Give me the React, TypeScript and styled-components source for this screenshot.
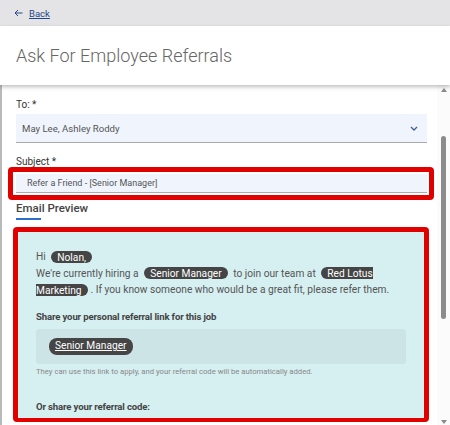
import React from "react";
import styled, { createGlobalStyle } from "styled-components";

const GlobalStyle = createGlobalStyle`
  html, body {
    margin: 0;
    padding: 0;
    height: 100%;
    overflow: hidden;
    background: #fff;
    font-family: Roboto, "Liberation Sans", Arial, sans-serif;
  }
`;

const Page = styled.div`
  display: flex;
  flex-direction: column;
  width: 450px;
  height: 425px;
`;

const TopBar = styled.div`
  height: 26px;
  background: #e4e4e6;
  display: flex;
  align-items: center;
  padding-left: 14px;
  gap: 6px;
  font-size: 9.5px;
`;

const BackLink = styled.a`
  color: #23468a;
  text-decoration: underline;
`;

const Header = styled.div`
  height: 59px;
  background: #fff;
  display: flex;
  align-items: center;
  padding-left: 16px;
  font-size: 18px;
  font-weight: 300;
  color: #666;
  box-shadow: 0 2px 4px rgba(0, 0, 0, 0.25);
  position: relative;
  z-index: 1;
`;

const Body = styled.div`
  flex: 1;
  display: flex;
  border-left: 2px solid #b9b9b9;
  min-height: 0;
`;

const Main = styled.div`
  flex: 1;
  padding: 13px 10px 0 14px;
  display: flex;
  flex-direction: column;
`;

const Label = styled.div<{ $gap: number; $top?: number }>`
  font-size: 10px;
  line-height: 14px;
  color: #333;
  margin-top: ${(p) => p.$top ?? 0}px;
  margin-bottom: ${(p) => p.$gap}px;
`;

const Field = styled.div<{ $h: number; $indent: number; $size: number }>`
  height: ${(p) => p.$h}px;
  background: #eff4fd;
  border-bottom: 1px solid #a9abb0;
  box-sizing: border-box;
  display: flex;
  align-items: center;
  justify-content: space-between;
  padding: 0 9px 0 ${(p) => p.$indent}px;
  font-size: ${(p) => p.$size}px;
  color: #555;
`;

const Highlighted = styled.div`
  position: relative;
`;

const RedMark = styled.div`
  position: absolute;
  top: -7px;
  bottom: -7px;
  left: -8px;
  right: -7px;
  border: 5px solid #e10000;
  border-radius: 4px;
  pointer-events: none;
`;

const SectionTitle = styled.div`
  font-size: 11.5px;
  font-weight: 500;
  color: #444;
  margin-top: 8px;
  padding-bottom: 3px;
  &::after {
    content: "";
    display: block;
    width: 25px;
    height: 2px;
    background: #2b6fc9;
    margin-top: 3px;
  }
`;

const PreviewFrame = styled.div`
  margin: 4px -2px 3px -3px;
  border: 5px solid #e10000;
  border-bottom-width: 4px;
  border-radius: 4px;
  flex: 1;
  min-height: 0;
  overflow: hidden;
`;

const Preview = styled.div`
  background: #d6eff1;
  height: 100%;
  padding: 17px 18px 0 18px;
  box-sizing: border-box;
  font-size: 10.2px;
  line-height: 16.5px;
  color: #555;
`;

const Pill = styled.span<{ $link?: boolean }>`
  background: #454545;
  color: #fff;
  border-radius: 8px;
  padding: 0.5px 6px;
  margin: 0 3px;
  text-decoration: ${(p) => (p.$link ? "underline" : "none")};
`;

const Strong = styled.div<{ $top: number }>`
  font-size: 9.6px;
  font-weight: 700;
  letter-spacing: -0.15px;
  color: #444;
  margin-top: ${(p) => p.$top}px;
`;

const LinkBox = styled.div`
  background: #cde4e7;
  border-radius: 3px;
  height: 35px;
  display: flex;
  align-items: center;
  padding-left: 10px;
  margin-top: 4px;
`;

const Hint = styled.div`
  font-size: 7.7px;
  line-height: 12px;
  color: #888;
  margin-top: 2px;
`;

const Scrollbar = styled.div`
  width: 13px;
  background: #fbfbfb;
  display: flex;
  flex-direction: column;
  align-items: center;
  justify-content: space-between;
  padding: 3px 0 1px;
`;

const Arrow = styled.div<{ $down?: boolean }>`
  width: 0;
  height: 0;
  border-left: 3.5px solid transparent;
  border-right: 3.5px solid transparent;
  ${(p) =>
    p.$down
      ? "border-top: 4px solid #8a8a8a;"
      : "border-bottom: 4px solid #8a8a8a;"}
`;

const Track = styled.div`
  flex: 1;
  width: 100%;
  display: flex;
  justify-content: center;
  padding-top: 44px;
  padding-bottom: 101px;
`;

const Thumb = styled.div`
  width: 5px;
  border-radius: 3px;
  background: #8c8c8c;
`;

const App: React.FC = () => {
  return (
    <>
      <GlobalStyle />
      <Page>
        <TopBar>
          <svg width="9" height="8" viewBox="0 0 9 8">
            <path d="M8.5 4H1M4 1L1 4L4 7" fill="none" stroke="#23468a" strokeWidth="1" />
          </svg>
          <BackLink>Back</BackLink>
        </TopBar>
        <Header>Ask For Employee Referrals</Header>
        <Body>
          <Main>
            <Label $gap={2}>To: *</Label>
            <Field $h={29} $indent={6} $size={9.6}>
              May Lee, Ashley Roddy
              <svg width="8" height="5" viewBox="0 0 8 5">
                <path d="M1 1L4 4L7 1" fill="none" stroke="#3d5f96" strokeWidth="1.3" />
              </svg>
            </Field>
            <Label $gap={5} $top={12}>Subject *</Label>
            <Highlighted>
              <Field $h={19} $indent={11} $size={9}>Refer a Friend - [Senior Manager]</Field>
              <RedMark />
            </Highlighted>
            <SectionTitle>Email Preview</SectionTitle>
            <PreviewFrame>
              <Preview>
                <div>
                  Hi <Pill>Nolan,</Pill>
                </div>
                <div>
                  We're currently hiring a <Pill>Senior Manager</Pill> to join our team at{" "}
                  <Pill>Red Lotus Marketing</Pill>. If you know someone who would be a great
                  fit, please refer them.
                </div>
                <Strong $top={10}>Share your personal referral link for this job</Strong>
                <LinkBox>
                  <Pill $link>Senior Manager</Pill>
                </LinkBox>
                <Hint>
                  They can use this link to apply, and your referral code will be automatically
                  added.
                </Hint>
                <Strong $top={21}>Or share your referral code:</Strong>
              </Preview>
            </PreviewFrame>
          </Main>
          <Scrollbar>
            <Arrow />
            <Track>
              <Thumb />
            </Track>
            <Arrow $down />
          </Scrollbar>
        </Body>
      </Page>
    </>
  );
};

export default App;
